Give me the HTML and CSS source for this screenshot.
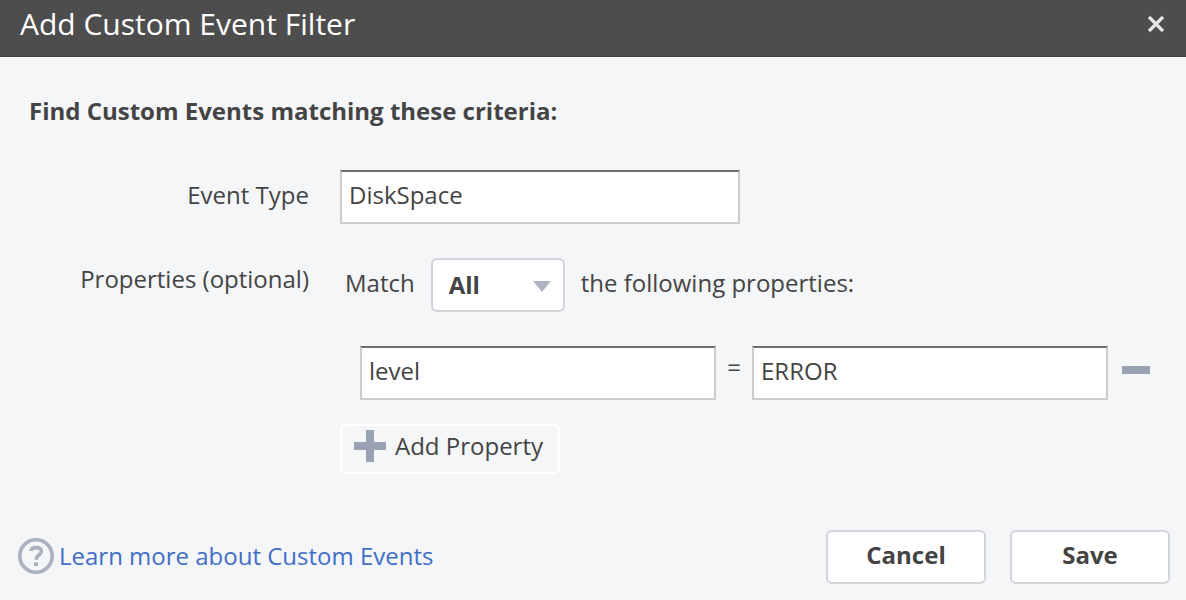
FILE: index.html
```html
<!DOCTYPE html>
<html lang="en">
<head>
<meta charset="utf-8">
<meta name="viewport" content="width=device-width, initial-scale=1">
<title>Add Custom Event Filter</title>
<link rel="stylesheet" href="styles.css">
</head>
<body>
<form class="dialog">
  <header class="dialog-header">
    <h1 class="dialog-title">Add Custom Event Filter</h1>
    <button class="close" type="button" aria-label="Close">
      <svg width="18" height="18" viewBox="0 0 18 18"><path d="M2 2 16 16M16 2 2 16" stroke="#e4e4e4" stroke-width="3.2"/></svg>
    </button>
  </header>
  <main class="dialog-body">
    <h2 class="intro">Find Custom Events matching these criteria:</h2>
    <div class="row">
      <label class="row-label" for="event-type">Event Type</label>
      <div class="row-content">
        <input class="text-input event-type" id="event-type" type="text" value="DiskSpace">
      </div>
    </div>
    <div class="row">
      <span class="row-label">Properties (optional)</span>
      <div class="row-content">
        <div class="match">
          <label for="match-mode">Match</label>
          <span class="select-wrap">
            <select class="select" id="match-mode"><option>All</option><option>Any</option></select>
            <svg class="caret" width="18" height="11" viewBox="0 0 18 11"><path d="M0 0H18L9 11Z" fill="#adb3c1"/></svg>
          </span>
          <span>the following properties:</span>
        </div>
        <div class="property">
          <input class="text-input" type="text" value="level" aria-label="Property name">
          <span class="equals">=</span>
          <input class="text-input" type="text" value="ERROR" aria-label="Property value">
          <button class="remove" type="button" aria-label="Remove property">
            <svg width="28" height="8" viewBox="0 0 28 8"><path d="M0 0H28V8H0Z" fill="#99a2b5"/></svg>
          </button>
        </div>
        <button class="add" type="button">
          <svg width="32" height="32" viewBox="0 0 32 32"><path d="M12 0H20V12H32V20H20V32H12V20H0V12H12Z" fill="#99a2b5"/></svg>
          <span>Add Property</span>
        </button>
      </div>
    </div>
  </main>
  <footer class="dialog-footer">
    <a class="help" href="#">
      <svg width="36" height="36" viewBox="0 0 36 36" fill="none" stroke="#a9b1bf"><circle cx="18" cy="18" r="16.2" stroke-width="3.6"/><path d="M13 13C13 10.4 15 9.6 18 9.6C21.4 9.6 23.4 11 23.4 13.6C23.4 16.8 18.2 17.2 18.2 21.8" stroke-width="3.6"/><path d="M16 24.4H20V28H16Z" fill="#a9b1bf" stroke="none"/></svg>
      <span>Learn more about Custom Events</span>
    </a>
    <div class="actions">
      <button class="button" type="button">Cancel</button>
      <button class="button" type="submit">Save</button>
    </div>
  </footer>
</form>
</body>
</html>
```
FILE: styles.css
```css
* { box-sizing: border-box; }
body {
  margin: 0;
  background: #f4f6f8;
  color: #444;
  font: 24px/32px "Open Sans", "Noto Sans", sans-serif;
}
button, input, select { font: inherit; color: inherit; }
button { padding: 0; border: 0; background: none; cursor: pointer; }
svg { display: block; flex: none; }
.dialog-header {
  display: flex;
  align-items: center;
  justify-content: space-between;
  padding: 0 21px 8px 20px;
  background: #4d4d4d;
  border-bottom: 1px solid #413f40;
}
.dialog-title {
  margin: 0;
  color: #fff;
  font-size: 30px;
  font-weight: 400;
  line-height: 48px;
}
.dialog-body { padding: 38px 36px 0 0; }
.intro {
  margin: 0 0 43px 29px;
  font-size: 24px;
  font-weight: 700;
  line-height: 32px;
}
.row {
  display: grid;
  grid-template-columns: 309px minmax(0, 1fr);
  column-gap: 31px;
  margin-bottom: 34px;
}
.row-label { padding-top: 9px; text-align: right; }
.row:last-child { margin-bottom: 0; }
.row:last-child .row-label { padding-top: 5px; }
.text-input {
  width: 100%;
  min-width: 0;
  height: 54px;
  padding: 0 7px 5px;
  border: 2px solid #cbccd0;
  border-top-color: #6d6d6f;
  border-radius: 0;
  background: #fff;
}
.event-type { display: block; max-width: 400px; }
.match {
  display: flex;
  align-items: center;
  gap: 16px;
  padding-left: 5px;
}
.match > label, .match > span:last-child { padding-bottom: 4px; }
.select-wrap { position: relative; }
.select {
  display: block;
  width: 134px;
  height: 54px;
  padding: 0 16px;
  appearance: none;
  border: 2px solid #d1d4da;
  border-radius: 6px;
  background: #fff;
  font-weight: 700;
}
.caret {
  position: absolute;
  top: 23px;
  right: 14px;
  pointer-events: none;
}
.property {
  display: flex;
  align-items: center;
  margin: 34px 0 24px;
  padding-left: 20px;
}
.property .text-input { flex: 1; }
.equals { flex: 0 0 36px; padding-bottom: 12px; text-align: center; }
.remove { margin-left: 14px; padding-bottom: 6px; }
.add {
  display: flex;
  align-items: center;
  gap: 9px;
  height: 50px;
  padding: 0 15px 6px 12px;
  border: 2px solid #fff;
  border-radius: 6px;
}
.dialog-footer {
  display: flex;
  align-items: center;
  justify-content: space-between;
  padding: 56px 16px 16px 18px;
}
.help {
  display: flex;
  align-items: center;
  gap: 5px;
  padding-bottom: 3px;
  color: #426ec6;
  text-decoration: none;
}
.actions { display: flex; gap: 24px; }
.button {
  width: 160px;
  height: 54px;
  padding-bottom: 4px;
  border: 2px solid #d1d4da;
  border-radius: 6px;
  background: #fff;
  font-weight: 700;
}
```
